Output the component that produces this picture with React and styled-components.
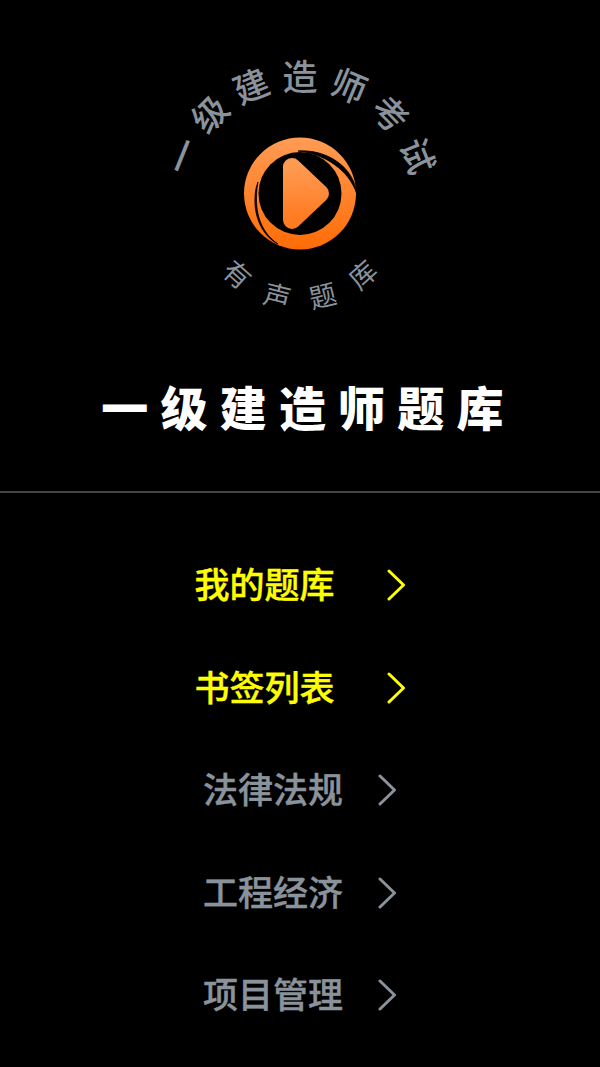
import React from "react";
import styled, { createGlobalStyle } from "styled-components";

const Global = createGlobalStyle`
  html, body { margin: 0; padding: 0; background: #000; }
`;

const cjk = `"Noto Sans CJK SC", "Noto Sans", sans-serif`;

const Page = styled.div`
  width: 600px;
  height: 1067px;
  overflow: hidden;
  background: #000;
  font-family: ${cjk};
  display: flex;
  flex-direction: column;
  padding-top: 40px;
  box-sizing: border-box;
`;
const LogoWrap = styled.div`
  display: flex;
  justify-content: center;
  height: 280px;
`;
const ArcChar = styled.text`
  font-family: ${cjk};
  fill: #8a939c;
  text-anchor: middle;
  dominant-baseline: central;
  font-size: ${(p) => p.$size}px;
  font-weight: ${(p) => p.$weight};
`;
const Title = styled.h1`
  margin: 0;
  height: 171px;
  padding-top: 56px;
  padding-left: 17px;
  box-sizing: border-box;
  text-align: center;
  color: #fff;
  font-size: 47px;
  line-height: 60px;
  font-weight: 900;
  letter-spacing: 12.2px;
  white-space: nowrap;
`;
const Divider = styled.div`
  height: 2px;
  background: #444;
  flex: none;
`;
const Menu = styled.nav`
  display: flex;
  flex-direction: column;
  padding-top: 41px;
`;
const Row = styled.div`
  height: 102.5px;
  display: flex;
  align-items: center;
  justify-content: center;
  gap: ${(p) => (p.$active ? 51 : 34)}px;
  color: ${(p) => (p.$active ? "#ffff00" : "#8a939c")};
`;
const Label = styled.span`
  font-size: 35px;
  line-height: 50px;
  font-weight: 500;
  -webkit-text-stroke: 0.4px currentColor;
  white-space: nowrap;
  padding-bottom: 4px;
`;

const Chevron = () => (
  <svg width="20" height="32" viewBox="0 0 20 32" fill="none">
    <polyline points="3,2 17.5,16 3,30" stroke="currentColor" strokeWidth="3" strokeLinecap="round" strokeLinejoin="round" />
  </svg>
);

const cx = 150, top = { cy: 163, r: 129, step: 22.7 }, bot = { cy: 165, r: 92.3 };
const topChars = [..."一级建造师考试"].map((c, i) => ({ c, a: (i - 3) * top.step }));
const botChars = [
  ["有", 42], ["声", 14], ["题", -14], ["库", -42],
];

const Logo = () => (
  <svg width="300" height="280" viewBox="0 0 300 280">
    <defs>
      <linearGradient id="ring" x1="0" y1="0" x2="0" y2="1">
        <stop offset="0" stopColor="#ff9c55" />
        <stop offset="1" stopColor="#ff6c05" />
      </linearGradient>
      <linearGradient id="play" x1="0" y1="0" x2="0" y2="1">
        <stop offset="0" stopColor="#ff9a52" />
        <stop offset="1" stopColor="#ff7a20" />
      </linearGradient>
    </defs>
    {topChars.map(({ c, a }) => {
      const rad = (a * Math.PI) / 180;
      const x = cx + top.r * Math.sin(rad);
      const y = top.cy - top.r * Math.cos(rad);
      return (
        <ArcChar key={c} $size={35} $weight={500} x={x} y={y} transform={`rotate(${a} ${x} ${y})`}>{c}</ArcChar>
      );
    })}
    <circle cx="150" cy="153.5" r="56" fill="url(#ring)" />
    <circle cx="150" cy="153.5" r="41.5" fill="#000" />
    <path d="M148 111 C178 109 204 128 206.5 153 C199 131 176 114 148 111 Z" fill="#000" stroke="#000" strokeWidth="0.8" />
    <path d="M108 142 C103 170 110 192 128 204 C112 196 104 176 105 158 C105 152 106 147 108 142 Z" fill="#000" stroke="#000" strokeWidth="0.8" />
    <path d="M142 127 L142 180 L170 153.5 Z" fill="url(#play)" stroke="url(#play)" strokeWidth="18" strokeLinejoin="round" />
    {botChars.map(([c, a]) => {
      const rad = (a * Math.PI) / 180;
      const x = cx - bot.r * Math.sin(rad);
      const y = bot.cy + bot.r * Math.cos(rad);
      return (
        <ArcChar key={c} $size={27} $weight={400} x={x} y={y} transform={`rotate(${a} ${x} ${y})`}>{c}</ArcChar>
      );
    })}
  </svg>
);

const items = [
  ["我的题库", true],
  ["书签列表", true],
  ["法律法规", false],
  ["工程经济", false],
  ["项目管理", false],
];

export default function App() {
  return (
    <Page>
      <Global />
      <LogoWrap><Logo /></LogoWrap>
      <Title>一级建造师题库</Title>
      <Divider />
      <Menu>
        {items.map(([t, active]) => (
          <Row key={t} $active={active}>
            <Label>{t}</Label>
            <Chevron />
          </Row>
        ))}
      </Menu>
    </Page>
  );
}
